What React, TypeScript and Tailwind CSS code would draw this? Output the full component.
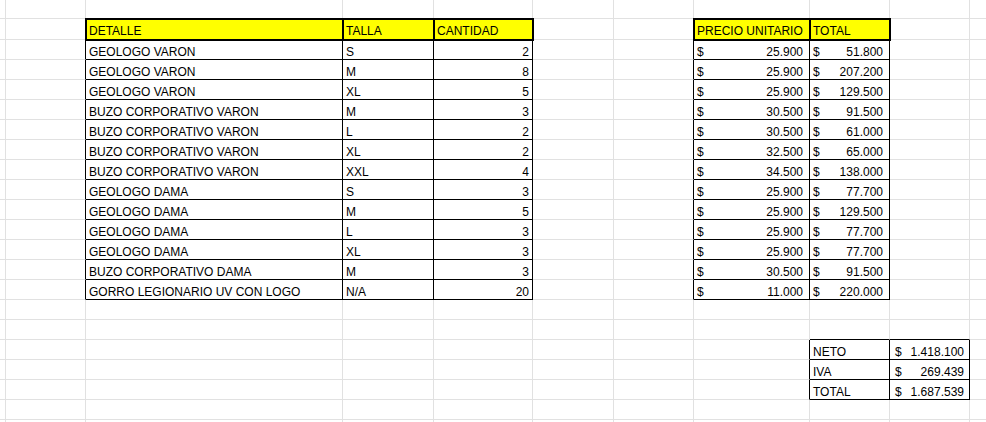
import React from 'react';

type Cell = {
    v?: string;
    t?: 'txt' | 'num' | 'cur';
    box?: boolean;
    head?: boolean;
    wide?: boolean;
};

const COL_W = [
    'w-[6px]', 'w-[80px]', 'w-[257px]', 'w-[91px]', 'w-[99px]', 'w-[81px]',
    'w-[80px]', 'w-[116px]', 'w-[80px]', 'w-[80px]', 'w-[40px]',
];

const ROW_H = [
    'h-[19px]', 'h-[21px]',
    'h-[20px]', 'h-[20px]', 'h-[20px]', 'h-[20px]', 'h-[20px]', 'h-[20px]', 'h-[20px]',
    'h-[20px]', 'h-[20px]', 'h-[20px]', 'h-[20px]', 'h-[20px]', 'h-[20px]',
    'h-[20px]', 'h-[20px]', 'h-[20px]', 'h-[20px]', 'h-[20px]', 'h-[20px]', 'h-[20px]',
];

const items: [string, string, string, string, string][] = [
    ['GEOLOGO VARON', 'S', '2', '25.900', '51.800'],
    ['GEOLOGO VARON', 'M', '8', '25.900', '207.200'],
    ['GEOLOGO VARON', 'XL', '5', '25.900', '129.500'],
    ['BUZO CORPORATIVO VARON', 'M', '3', '30.500', '91.500'],
    ['BUZO CORPORATIVO VARON', 'L', '2', '30.500', '61.000'],
    ['BUZO CORPORATIVO VARON', 'XL', '2', '32.500', '65.000'],
    ['BUZO CORPORATIVO VARON', 'XXL', '4', '34.500', '138.000'],
    ['GEOLOGO DAMA', 'S', '3', '25.900', '77.700'],
    ['GEOLOGO DAMA', 'M', '5', '25.900', '129.500'],
    ['GEOLOGO DAMA', 'L', '3', '25.900', '77.700'],
    ['GEOLOGO DAMA', 'XL', '3', '25.900', '77.700'],
    ['BUZO CORPORATIVO DAMA', 'M', '3', '30.500', '91.500'],
    ['GORRO LEGIONARIO UV CON LOGO', 'N/A', '20', '11.000', '220.000'],
];

const totals: [string, string][] = [
    ['NETO', '1.418.100'],
    ['IVA', '269.439'],
    ['TOTAL', '1.687.539'],
];

const buildSheet = (): Cell[][] => {
    const sheet: Cell[][] = ROW_H.map(() => COL_W.map(() => ({})));
    const head = (c: number, v: string) => (sheet[1][c] = { v, t: 'txt', box: true, head: true });
    head(2, 'DETALLE');
    head(3, 'TALLA');
    head(4, 'CANTIDAD');
    head(7, 'PRECIO UNITARIO');
    head(8, 'TOTAL');

    items.forEach(([det, talla, cant, precio, total], i) => {
        const r = i + 2;
        sheet[r][2] = { v: det, t: 'txt', box: true };
        sheet[r][3] = { v: talla, t: 'txt', box: true };
        sheet[r][4] = { v: cant, t: 'num', box: true };
        sheet[r][7] = { v: precio, t: 'cur', box: true };
        sheet[r][8] = { v: total, t: 'cur', box: true };
    });

    totals.forEach(([label, value], i) => {
        const r = i + 17;
        sheet[r][8] = { v: label, t: 'txt', box: true };
        sheet[r][9] = { v: value, t: 'cur', box: true, wide: true };
    });

    return sheet;
};

const SheetCell: React.FC<{ cell: Cell; width: string; right: boolean; bottom: boolean }> = ({
    cell,
    width,
    right,
    bottom,
}) => {
    const base = `${width} shrink-0 h-full border-r border-b flex items-end leading-[14px] ${
        right ? 'border-r-black' : 'border-r-[#e1e1e1]'
    } ${bottom ? 'border-b-black' : 'border-b-[#e1e1e1]'}`;
    const head = cell.head ? 'bg-[#ffff00] outline-2 outline-black -outline-offset-1 relative pb-[1px]' : '';

    if (cell.t === 'num') {
        return <div className={`${base} justify-end pr-[3px]`}>{cell.v}</div>;
    }
    if (cell.t === 'cur') {
        return (
            <div className={`${base} justify-between ${cell.wide ? 'pl-[5px] pr-[5px]' : 'pl-[3px] pr-[6px]'}`}>
                <span>$</span>
                <span>{cell.v}</span>
            </div>
        );
    }
    return (
        <div className={`${base} ${head} pl-[3px] whitespace-nowrap overflow-visible`}>{cell.v}</div>
    );
};

const App: React.FC = () => {
    const sheet = buildSheet();
    const isBox = (r: number, c: number) => !!sheet[r]?.[c]?.box;

    return (
        <div
            className="w-[986px] h-[422px] overflow-hidden bg-white text-[12px] text-black"
            style={{ fontFamily: '"Liberation Sans", Arial, sans-serif' }}
        >
            {sheet.map((row, r) => (
                <div key={r} className={`flex ${ROW_H[r]}`}>
                    {row.map((cell, c) => (
                        <SheetCell
                            key={c}
                            cell={cell}
                            width={COL_W[c]}
                            right={isBox(r, c) || isBox(r, c + 1)}
                            bottom={isBox(r, c) || isBox(r + 1, c)}
                        />
                    ))}
                </div>
            ))}
        </div>
    );
};

export default App;
